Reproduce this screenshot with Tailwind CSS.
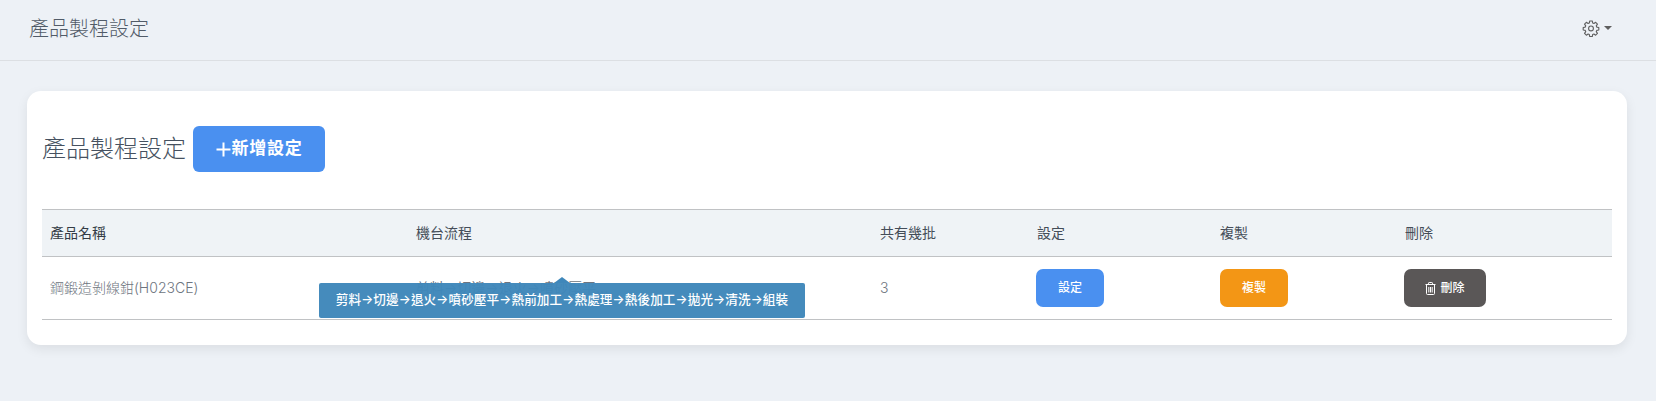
<!DOCTYPE html>
<html lang="zh-Hant">
<head>
  <meta charset="UTF-8" />
  <title>產品製程設定</title>
  <script src="https://cdn.jsdelivr.net/npm/@tailwindcss/browser@4"></script>
</head>
<body class="bg-[#edf1f6] min-h-screen font-['Inter','Noto_Sans_CJK_TC',sans-serif] text-[#4a5568]">
  <nav class="h-[61px] border-b border-[#dcdfe3] flex items-center justify-between pl-[29px] pr-[44px]">
    <span class="text-[20px] font-light text-[#515b68] -mt-[3px]">產品製程設定</span>
    <div class="flex items-center gap-[4px] text-[#5f5f5f] -mt-[4px]">
      <svg class="w-[18px] h-[18px]" viewBox="0 0 24 24" fill="none" stroke="currentColor" stroke-width="1.5" stroke-linejoin="round">
        <path d="M10.3 2.6h3.4l.5 2.7 1.7.7 2.3-1.6 2.4 2.4-1.6 2.3.7 1.7 2.7.5v3.4l-2.7.5-.7 1.7 1.6 2.3-2.4 2.4-2.3-1.6-1.7.7-.5 2.7h-3.4l-.5-2.7-1.7-.7-2.3 1.6-2.4-2.4 1.6-2.3-.7-1.7-2.7-.5v-3.4l2.7-.5.7-1.7-1.6-2.3 2.4-2.4 2.3 1.6 1.7-.7z" />
        <circle cx="12" cy="12.6" r="3.2" />
      </svg>
      <span class="w-0 h-0 border-x-[4px] border-x-transparent border-t-[4px] border-t-[#5f5f5f]"></span>
    </div>
  </nav>

  <main class="pl-[27px] pr-[29px] pt-[30px]">
    <section class="bg-white rounded-[14px] shadow-[0_4px_12px_rgba(0,0,0,0.08)] h-[254px] px-[15px] pt-[35px]">
      <div class="flex items-center gap-[7px] h-[46px]">
        <h2 class="text-[24px] text-[#465160] font-light">產品製程設定</h2>
        <button class="w-[132px] h-[46px] bg-[#4a90f0] text-white text-[17px] font-bold rounded-[6px] flex items-center justify-center tracking-[0.7px]">
          <svg class="w-[15px] h-[15px] mr-[1px]" viewBox="0 0 15 15" fill="none" stroke="currentColor" stroke-width="2"><path d="M7.5 0.5v14M0.5 7.5h14" /></svg>
          新增設定
        </button>
      </div>

      <table class="w-[1570px] mt-[37px] table-fixed border-collapse text-[14px]">
        <thead class="bg-[#eff3f6] text-[#444d58]">
          <tr class="h-[47px] border-y border-[#c0c2c4] text-left">
            <th class="w-[366px] pl-[8px] pb-[1px] font-normal text-[#333b45]">產品名稱</th>
            <th class="w-[464px] pl-[8px] pb-[1px] font-normal">機台流程</th>
            <th class="w-[157px] pl-[8px] pb-[1px] font-normal">共有幾批</th>
            <th class="w-[183px] pl-[8px] pb-[1px] font-normal">設定</th>
            <th class="w-[185px] pl-[8px] pb-[1px] font-normal">複製</th>
            <th class="pl-[8px] pb-[1px] font-normal">刪除</th>
          </tr>
        </thead>
        <tbody>
          <tr class="h-[63px] border-b border-[#c0c2c4] text-[#6e7580]">
            <td class="pl-[8px] pb-[2px] font-light">鋼鍛造剝線鉗(H023CE)</td>
            <td class="pl-[8px] pb-[2px] relative">
              <span>剪料→切邊→退火→噴砂壓平...</span>
              <div class="absolute left-[-89px] top-[26px] w-[486px] h-[35px] bg-[#3f87ba]/97 rounded-[2px] text-white text-[12.6px] tracking-[0.12px] font-medium flex items-center justify-center whitespace-nowrap">
                <span class="absolute -top-[6px] left-[235px] w-0 h-0 border-x-[8px] border-x-transparent border-b-[6px] border-b-[#3f87ba]"></span>
                剪料→切邊→退火→噴砂壓平→熱前加工→熱處理→熱後加工→拋光→清洗→組裝
              </div>
            </td>
            <td class="pl-[8px] pb-[2px] font-light">3</td>
            <td class="pl-[7px]">
              <button class="w-[68px] h-[38px] bg-[#4a90f0] text-white text-[12px] font-medium rounded-[7px]">設定</button>
            </td>
            <td class="pl-[8px]">
              <button class="w-[68px] h-[38px] bg-[#f39615] text-white text-[12px] font-medium rounded-[7px]">複製</button>
            </td>
            <td class="pl-[7px]">
              <button class="w-[82px] h-[38px] bg-[#5a5757] text-white text-[12px] font-medium rounded-[7px] flex items-center justify-center gap-[4px]">
                <svg class="w-[11px] h-[13px]" viewBox="0 0 11 13" fill="none" stroke="currentColor" stroke-width="1"><path d="M0.5 2.5h10M3.5 2.5V1.2q0-.7.7-.7h2.6q.7 0 .7.7v1.3M1.5 2.5v9q0 1 1 1h6q1 0 1-1v-9M3.8 5v5.5M5.5 5v5.5M7.2 5v5.5" /></svg>
                刪除
              </button>
            </td>
          </tr>
        </tbody>
      </table>
    </section>
  </main>
</body>
</html>
